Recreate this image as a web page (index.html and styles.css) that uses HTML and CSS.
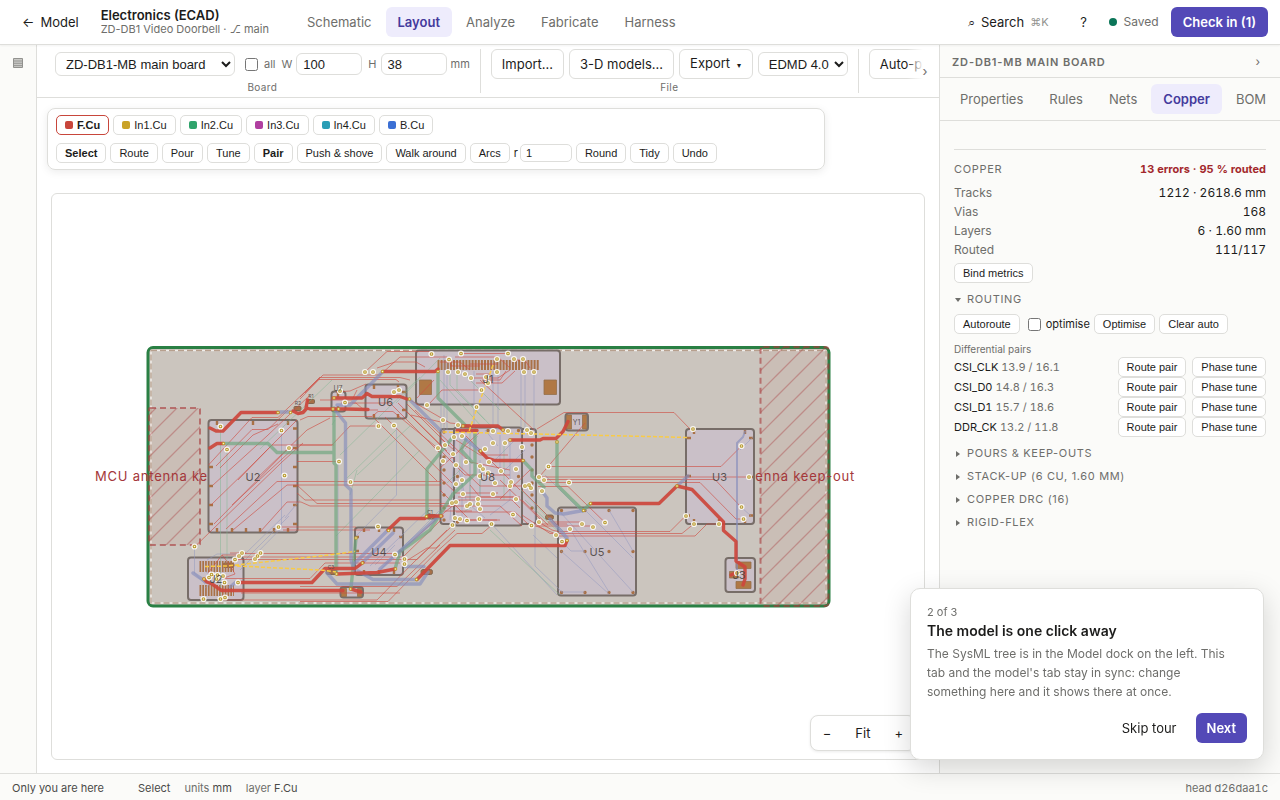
FILE: index.html
```html
<!DOCTYPE html>
<html lang="en">
<head>
<meta charset="utf-8">
<title>Electronics (ECAD)</title>
<link rel="stylesheet" href="styles.css">
</head>
<body>
<header class="topbar">
  <button class="ghost back"><span>←</span> Model</button>
  <div class="brand">
    <h1>Electronics (ECAD)</h1>
    <p>ZD-DB1 Video Doorbell · ⎇ main</p>
  </div>
  <nav class="tabs">
    <button>Schematic</button><button class="active">Layout</button><button>Analyze</button><button>Fabricate</button><button>Harness</button>
  </nav>
  <div class="top-actions">
    <button class="ghost search"><span class="glass">⌕</span> Search <kbd>⌘K</kbd></button>
    <button class="ghost help">?</button>
    <span class="saved"><i></i>Saved</span>
    <button class="primary">Check in (1)</button>
  </div>
</header>

<div class="workspace">
  <aside class="rail">
    <button class="rail-button" aria-label="Model dock">
      <svg width="12" height="12" viewBox="0 0 12 12"><path d="M1.5 1.5h9v9h-9z" fill="#c9c9c6" stroke="#92928f"/><path d="M1 4h10M1 6.3h10M1 8.6h10" stroke="#92928f" stroke-width=".9"/></svg>
    </button>
  </aside>

  <main class="center">
    <div class="ribbon">
      <section class="group board-group">
        <div class="group-row">
          <select class="board-select" aria-label="Board"><option>ZD-DB1-MB main board</option></select>
          <label class="all"><input type="checkbox"> all</label>
          <label class="dim">W <input type="text" value="100"></label>
          <label class="dim height">H <input type="text" value="38"> mm</label>
        </div>
        <span class="group-name">Board</span>
      </section>
      <section class="group file-group">
        <div class="group-row">
          <button class="tool">Import…</button><button class="tool">3-D models…</button><button class="tool">Export <small>▾</small></button>
          <select class="format" aria-label="Format"><option>EDMD 4.0</option></select>
        </div>
        <span class="group-name">File</span>
      </section>
      <section class="group place-group">
        <div class="group-row"><button class="tool">Auto-place</button></div>
      </section>
      <button class="more" aria-label="More tools">›</button>
    </div>

    <div class="palette">
      <div class="palette-row">
        <button class="mini layer on"><i class="c-f"></i>F.Cu</button>
        <button class="mini layer"><i class="c-1"></i>In1.Cu</button>
        <button class="mini layer"><i class="c-2"></i>In2.Cu</button>
        <button class="mini layer"><i class="c-3"></i>In3.Cu</button>
        <button class="mini layer"><i class="c-4"></i>In4.Cu</button>
        <button class="mini layer"><i class="c-b"></i>B.Cu</button>
      </div>
      <div class="palette-row">
        <button class="mini strong">Select</button>
        <button class="mini">Route</button>
        <button class="mini">Pour</button>
        <button class="mini">Tune</button>
        <button class="mini strong">Pair</button>
        <button class="mini">Push &amp; shove</button>
        <button class="mini">Walk around</button>
        <button class="mini">Arcs</button>
        <label class="radius">r <input type="text" value="1"></label>
        <button class="mini">Round</button>
        <button class="mini">Tidy</button>
        <button class="mini">Undo</button>
      </div>
    </div>

    <div class="canvas">
      <svg class="board" viewBox="52 194 872 565" role="img" aria-label="Board layout">
        <defs>
          <pattern id="hatch" width="21" height="21" patternUnits="userSpaceOnUse">
            <path d="M-1 19L19-1M16 23L23 16" stroke="#a8383a" stroke-opacity=".36" stroke-width="1.3"/>
          </pattern>
          <path id="vias" d="M220.500 426.500h0M281.500 430.500h0M227 449.500h0M289 448h0M284.500 475.500h0M278.500 527h0M194.500 546.500h0M365 372h0M373 372h0M431.500 354h0M461 353.500h0M508 353.500h0M449 359.500h0M497 359h0M514 359h0M523 359h0M448 372h0M458 372h0M465 374h0M471 378h0M497 372h0M524 372h0M534 372h0M486 377h0M488 383h0M481.500 390h0M476.500 407h0M427 405h0M443 420h0M458 425h0M345 402.500h0M378.500 426h0M394 425.500h0M394 392h0M399 390h0M340 391h0M339 461.500h0M350.500 482h0M378 526.500h0M395 554.500h0M404.500 559h0M404.500 564h0M462 436h0M454 437h0M493 431h0M508 431h0M527 430h0M531 433h0M505 443h0M493 443h0M522 447h0M485 449h0M445 445h0M438 448h0M453 454h0M443 461h0M466 462h0M489 462h0M456 465h0M480 466h0M483 469h0M516 469h0M501 471h0M480 476h0M488 473h0M548.500 466.500h0M539 477h0M544 480h0M569 482.500h0M542 491h0M605 522.500h0M593 527h0M582 524h0M570 529h0M562 541.500h0M556 535h0M531.500 525.500h0M539 522h0M491.500 524h0M452.500 525h0M455 518h0M460 519h0M467 520.500h0M479.500 519h0M513 514.500h0M480 509h0M478 499h0M478 504h0M467 506h0M470 504h0M456 502h0M452 503h0M463 494h0M493 494h0M516 499h0M456 484h0M462 480h0M495 483h0M511 482h0M510 486h0M525 486h0M529 485h0M531 488h0M693 429h0M741.500 446h0M749 477h0M741.500 507h0M743.500 519h0M686 516h0M694 524h0M719 524h0M242 553h0M239 556h0M235 559.500h0M260.500 553h0M257.500 556h0M255 559h0M211.500 574.500h0M217.500 575h0M223 576h0M209 577.500h0M216.500 579h0M224.500 582.500h0M238 582.500h0M203.500 599h0M220.500 599h0M225 597.500h0M737 573h0"/>
          <path id="spots" d="M278 412.500h0M290.500 412.500h0M223.500 443.500h0M382.500 371.500h0M438 371.500h0M334 398h0M333 409h0M338.500 409h0M409.500 399h0M388.500 530.500h0M362.500 563h0M336.500 574h0M395.500 569h0M350.500 589h0M356 538h0M426.500 516.500h0M441 516h0M463 426h0M503 430h0M510 440h0M480.500 451h0M523 460.500h0M557 442h0M583.500 510.500h0M590.500 503.500h0M567 540.500h0M416.500 579.500h0M677 486h0M204 579h0"/>
        </defs>
        <rect class="outline" x="148" y="347.500" width="681" height="258.500" rx="5"/>
        <rect class="edge-white" x="151" y="350.500" width="675" height="252.500"/>
        <rect class="edge-dash" x="151" y="350.500" width="675" height="252.500"/>
        <g class="keepout">
          <rect x="149" y="408" width="51" height="137" rx="1"/>
          <rect x="149" y="408" width="51" height="137"/>
          <rect x="760.500" y="347" width="68" height="259" rx="3"/>
          <rect x="760.500" y="347" width="68" height="259"/>
        </g>
        <g class="keepout-name">
          <text x="174.500" y="481">MCU antenna keep-out</text>
          <text x="794.500" y="481">antenna keep-out</text>
        </g>
        <g class="part">
          <rect x="208.500" y="420" width="89" height="112.500" rx="3"/>
          <rect x="365.500" y="384.500" width="41" height="34" rx="3"/>
          <rect x="331.500" y="391.500" width="14" height="20" rx="3"/>
          <rect x="416" y="350.500" width="144" height="54" rx="3"/>
          <rect x="440.500" y="429" width="95.500" height="95" rx="3"/>
          <rect x="454" y="427.500" width="68" height="98" rx="3"/>
          <rect x="355" y="527.500" width="48" height="47.500" rx="3"/>
          <rect x="558" y="507.500" width="78" height="88" rx="3"/>
          <rect x="686" y="429" width="68" height="95" rx="3"/>
          <rect x="725.500" y="558" width="29.500" height="34" rx="3"/>
          <rect x="188" y="557.500" width="55.500" height="42.500" rx="3"/>
          <rect x="565.500" y="413.500" width="22.500" height="17" rx="3"/>
          <rect x="340.500" y="587" width="22.500" height="10.500" rx="3"/>
        </g>
        <g class="small-part">
          <rect x="326" y="570" width="11" height="4.500" rx="2"/><rect x="421" y="569.500" width="11.500" height="5" rx="2"/>
          <rect x="426" y="514.500" width="11" height="4.500" rx="2"/><rect x="294" y="406.500" width="7" height="4" rx="1"/>
          <rect x="307.500" y="399.500" width="7" height="4" rx="1"/><rect x="545.500" y="515" width="8" height="4.500" rx="2"/>
          <rect x="223" y="563" width="11" height="4.500" rx="2"/>
        </g>
        <g class="pad">
          <path d="M419.500 380h12v14.500h-12zM544 380h12.500v14.500H544zM736 562h15v6.500h-15zM729.500 571.500h9v6.500h-9zM736 581.500h15v7h-15zM566.500 415h5v14h-5zM582.500 415h4v14h-4zM341.500 588.500h5v8h-5zM357.500 588.500h4v8h-4z"/>
          <path class="fingers" d="M437.500 365H539"/>
          <path class="fingers small" d="M199.500 566.500H234M199.500 590.500H234"/>
          <path class="pins" d="M217 421v4M253 421v4M288 421v4M293 428.500h4M293 448h4M293 467h4M293 486h4M293 505h4M293 524h4M209 467h4M209 486h4M209 505h4M209 524h4M217 528v4M232 528v4M246 528v4M260 528v4M274 528v4M288 528v4M374 385v4M398 385v4M374 414v4M398 414v4M402 392h4M402 410h4M338 392v5M338 406v5M364 528v4M379 528v4M394 528v4M356 551h3M399 537h3M356 537h3M399 551h3M364 570v4M379 570v4M394 570v4M694 430v4M745 430v4M687 438h4M749 438h4M687 476h4M749 477h4M686 515.500h4M749 515.500h4M694 519v4M719 519v4M745 519v4"/>
          <path class="balls" d="M561.500 510.500h0M585 510.500h0M609 510.500h0M633 510.500h0M561.500 551.500h0M585 551.500h0M609 551.500h0M633 551.500h0M561.500 592.500h0M585 592.500h0M609 592.500h0M633 592.500h0M444 432h0M444 445h0M444 457h0M444 470h0M444 483h0M444 495h0M444 508h0M444 520h0M532 432h0M532 445h0M532 457h0M532 470h0M532 483h0M532 495h0M532 508h0M457.500 476.500h0M518.500 430.500h0M518.500 476.500h0M457.500 522h0M488 430.500h0"/>
        </g>

        <g class="thin violet">
          <path d="M281.500 430.500V528L240 570M396.500 426V495L356 536M441 405V430M444 355V430M447 360V430M474 371V440M493 371V425M521 371V440M525 371V432M534 371V430M498 371V430M194.500 547V573L205 584M207 560L217 554H245L285 515M245 560L289 516M300 500L285 518M488 520L557 595M535 490V566L562 592M545 475L583 513M533 535L557 558M567 524L609 592M585 551H571L561 541M609 510L633 551M585 510L633 558M561 551L609 594M561 592H585M560 512L633 592M462 440V520M470 445V505L485 518M500 435V470M510 438V500L490 515M480 460V508M459 470L466 500M740 450L753 437M741 507L751 516M515 440L490 465M525 450L500 475M455 440L450 520M498 446L485 430M338 461V571M380 570L440 510M370 566L430 508M375 565L395 545M205 571L215 580 205 588"/>
        </g>
        <g class="thin green">
          <path d="M220.500 427V600M227 449V562M260 449L332 380M347 478L396 430M396 403L440 358M357 475L410 426M450 371V385L485 420M457 371V390L490 425M466 371V376L500 410M336 536L420 450M521 490L560 530M490 530L560 595M470 430V500M480 465V500L464 512M460 437V470L447 483M504 440V500M525 500L567 540M530 498L565 533M340 455L420 377M465 449L478 436M440 380L480 425M335 420L332 425M350 495L357 470"/>
        </g>
        <g class="thin red">
          <path d="M208.500 465L252 417.500H278L320 377.500H400L410 380M216 466L252 429.500H268L288 410M220 468L253 435 278 424M300 397L320 377M305 393L323 375H380L400 357H447L452 366M365 372L387 351.500H430M377 368L395 362H416L425 367M300 399L319 379.500H396L399 382M298 414L308 408M213 485L267 436 310 395M300 420L308 416.500H372L378 411.500H393L440 450M300 445H332L350 426H378M297 461.500H337M238 480L272 445H334M232 505L294 448M255 480L307 430 330 418M211 505L250 467 297 420M195 546.500L282 462 303 443M226 529L277 481.500H441M233 530L287 485H441M214 524L287 450M260 532L287 502H301L310 506H450M297 485L317 503.500H452M278 527H356M283 530H357L370 530M297 493L305 500H440M243 553.500H398L440 516 460 500M243 557H403L441 520M237 559.500H417L453 525M223 578.500H310L325 563H400M220 600H377L413 563 447 530M300 601.500H388L437 551.500 457 533.500H482L492 525M300 586.500H397L440 545M241 593H400M403 563L427 548H436L455 530M320 400H352L357 390M352 403H390L440 453M375 419L437 481M385 417L452 483M398 403L447 451M407 404L449 446M406 411L455 460M410 400L450 423 480 426M430 403L442 390H482M417 398L434 380M480 380L534 430M411 415L445 423M415 410L470 462 510 470M537 429L564 412.500H674L690 429M540 476L585 423M548 466.500H721L741 446.500M535 477H749M538 479.500H715L741 507M538 482.500H700L736 519H743M538 486.500H568L605 522.500M560 531.500H670L685 516.500M560 533.500H682L693 524.500M558 536H695L707 524H719M537 521L552 530 560 532M522 515L550 533.500H563M536 526L556 534M534 526H593M548 522H582M537 524H567M522 500L548 525M522 490L557 525M500 480L540 519M440 438L454 450M440 450L465 475H510M440 478L456 493H498M440 490L470 520H497M441 506H500L522 526M441 511H472M454 500H512L520 508M456 512H515L528 524M458 497H514M456 520H500M470 485L480 497H520M456 463L480 486H530M456 440L480 455H508M466 436L520 490M440 468L480 432M530 470L500 499M455 357H498L510 368M440 362H460L470 370M461 353.500H510M450 366H480M470 364H498M515 360H525L530 368M470 378H498L510 370M476 383H502L515 371M482 380H500L506 371M476 374H490M208 573L222 555H239M222 555L230 565 235 574 224 578M230 553L246 553M336 392L350 391 366 384M341 403H356L364 410H378"/>
        </g>
        <g class="wide green">
          <path d="M223 443.500H268L277 452.500H334M334 408V463L336 465V573M438 371.500V398L467 427M453 437L427 469V516M557 441.500V485L583 510.500 590 504M475 430V474L453 494 430 530 400 551.500 395 569M356 538L351 588M523 460.500L532 470V476L544 487M466 440L461 450 472 462"/>
        </g>
        <g class="wide violet">
          <path d="M278 412H290M383 371.500L350 405H337M335 410L345.500 423V485L351 490V560L354 570M409 399L440 430 M463 437L480 451M388 530L353 565M393 533L362 563M327 573L337 584H372L384 584M358 571L373 579.500H417M371 584H420L428 572M405 566.500H424M380 569L440 515M542 491L547 498V506L555 513 564 514 583 510.500M550 519L567 538M193 573L206 582M236 582L230 587M688 476L677 486"/>
          <path class="mid" d="M745 431.500L743 437 737 443V573"/>
        </g>
        <g class="wide red">
          <path d="M210 428L216 431H223L241 412.500H278M293 411L298 413.500 303 412.500 307 408 310 409H346L368 409.500M306 408L307.500 400M333 398H362L367 393.500 372 396.500H400L407 399M210 448L217 443.500H223M383 371.500H435L438 369M463 426H498L503 430M457 430.500H477M510 440H540L543 438.500H556L563 431.500 568 421.500M480 451L487 458 495 460.500H523M590.500 503.500H659L677 486 692 489.500 723.500 522V530.500L736 541.500V561L745 567V579L743 585M417 579.500L450 545.500H565L567 540.500M388 530L400 518.500H425L428 516H442M237.500 582.500H312L325 568.500H355L363 562.500M337 574L377 572.500 395 569M204 579L207 582 212 584 221.500 590.500H343M351 589L361 592M731 575L738 572"/>
        </g>
        <g class="air">
          <path d="M205 566.500L227 566 320 556 355 551.500M237 566L320 570 336 572M443 432L650 436.500 687 437.500M493 365L484 390 477 408 469 431.500"/>
        </g>
        <g class="dots">
          <use href="#vias" class="via-halo"/>
          <use href="#vias" class="via-ring"/>
          <use href="#vias" class="via-hole"/>
          <use href="#spots" class="spot"/>
          <use href="#spots" class="spot-core"/>
        </g>
        <g class="designator">
          <text x="253" y="480.500">U2</text><text x="385.500" y="406">U6</text><text x="488" y="382.500">J1</text>
          <text x="487.500" y="480.500">U8</text><text x="379" y="555.500">U4</text><text x="597" y="555.500">U5</text>
          <text x="719.500" y="480.500">U3</text><text x="739" y="579">J3</text><text x="216" y="583">J2</text>
          <text class="s" x="338" y="390.500">U7</text><text class="s" x="576.500" y="425">Y1</text>
          <text class="xs" x="298" y="405">R2</text><text class="xs" x="311" y="398">R1</text><text class="xs" x="430" y="514">C1</text><text class="xs" x="331" y="569">C3</text>
        </g>
      </svg>
      <div class="zoom"><button>−</button><button>Fit</button><button>+</button></div>
    </div>
  </main>

  <aside class="inspector">
    <div class="inspector-head"><h2>ZD-DB1-MB main board</h2><button aria-label="Collapse panel">›</button></div>
    <nav class="tabs inspector-tabs">
      <button>Properties</button><button>Rules</button><button>Nets</button><button class="active">Copper</button><button>BOM</button>
    </nav>
    <div class="inspector-body">
      <section class="copper">
        <div class="copper-head"><h3>Copper</h3><strong>13 errors · 95 % routed</strong></div>
        <dl class="stats">
          <div><dt>Tracks</dt><dd>1212 · 2618.6 mm</dd></div>
          <div><dt>Vias</dt><dd>168</dd></div>
          <div><dt>Layers</dt><dd>6 · 1.60 mm</dd></div>
          <div><dt>Routed</dt><dd>111/117</dd></div>
        </dl>
        <button class="mini">Bind metrics</button>
      </section>
      <details open>
        <summary>Routing</summary>
        <div class="route-tools">
          <button class="mini">Autoroute</button>
          <label class="opt"><input type="checkbox"> optimise</label>
          <button class="mini">Optimise</button>
          <button class="mini">Clear auto</button>
        </div>
        <p class="sub">Differential pairs</p>
        <ul class="pairs">
          <li><span>CSI_CLK <em>13.9 / 16.1</em></span><button class="mini">Route pair</button><button class="mini">Phase tune</button></li>
          <li><span>CSI_D0 <em>14.8 / 16.3</em></span><button class="mini">Route pair</button><button class="mini">Phase tune</button></li>
          <li><span>CSI_D1 <em>15.7 / 18.6</em></span><button class="mini">Route pair</button><button class="mini">Phase tune</button></li>
          <li><span>DDR_CK <em>13.2 / 11.8</em></span><button class="mini">Route pair</button><button class="mini">Phase tune</button></li>
        </ul>
      </details>
      <details><summary>Pours &amp; keep-outs</summary></details>
      <details><summary>Stack-up (6 Cu, 1.60 mm)</summary></details>
      <details><summary>Copper DRC (16)</summary></details>
      <details><summary>Rigid-flex</summary></details>
    </div>
  </aside>
</div>

<footer class="status">
  <span class="who">Only you are here</span>
  <span>Select</span>
  <span><em>units</em> mm</span>
  <span><em>layer</em> F.Cu</span>
  <span class="head">head d26daa1c</span>
</footer>

<div class="tour" role="dialog" aria-labelledby="tour-title">
  <p class="step">2 of 3</p>
  <h2 id="tour-title">The model is one click away</h2>
  <p class="copy">The SysML tree is in the Model dock on the left. This tab and the model's tab stay in sync: change something here and it shows there at once.</p>
  <div class="tour-actions"><button class="ghost">Skip tour</button><button class="primary">Next</button></div>
</div>
</body>
</html>
```
FILE: styles.css
```css
* { box-sizing: border-box; }
body {
  margin: 0;
  height: 100vh;
  display: grid;
  grid-template-rows: auto 1fr auto;
  overflow: hidden;
  background: #fff;
  color: #1c1c1b;
  font: 13px/20px Inter, "Liberation Sans", sans-serif;
}
h1, h2, h3, p, dl, dd, ul { margin: 0; padding: 0; }
button, input, select { font-family: "Liberation Sans", sans-serif; color: #1c1c1b; margin: 0; }
input[type="checkbox"] { width: 13px; height: 13px; }
em { font-style: normal; color: #6e6e6b; }

/* Top bar */
.topbar {
  position: relative;
  z-index: 1;
  display: flex;
  align-items: center;
  height: 45px;
  padding: 0 12px 1px;
  border-bottom: 1px solid #dededb;
  box-shadow: 0 1px 2px rgba(0, 0, 0, .05);
}
.ghost, .primary, .tabs button {
  height: 30px;
  padding: 0 11px;
  border: 0;
  border-radius: 6px;
  background: none;
  font: 13px/20px Inter, "Liberation Sans", sans-serif;
  white-space: nowrap;
}
.back { display: flex; align-items: center; gap: 6px; padding: 0 10px; }
.topbar .primary, .tour .primary, .tabs .active { font-weight: 600; }
.primary { background: #5349b7; color: #fff; }
.topbar .primary { padding: 0 12px; }
.brand { margin-left: 12px; }
.brand h1 { font-size: 13px; line-height: 15px; font-weight: 600; }
.brand p { font-size: 11px; line-height: 13px; color: #6e6e6b; }
.tabs { display: flex; gap: 2px; }
.tabs button { padding: 0 12px; color: #6e6e6b; }
.tabs .active { background: #eeecfc; color: #443a9c; }
.topbar .tabs { margin-left: 26px; }
.top-actions { margin-left: auto; display: flex; align-items: center; }
.search { display: flex; align-items: center; gap: 6px; }
.search .glass { width: 8px; }
.search kbd { font: 11px/20px Inter, sans-serif; color: #92928f; }
.help { margin: 0 10px 0 9px; width: 30px; }
.saved { display: flex; align-items: center; gap: 7px; margin-right: 12px; font-size: 12px; color: #6e6e6b; }
.saved i { width: 8px; height: 8px; border-radius: 50%; background: #0b7558; }

/* Work area */
.workspace { display: grid; grid-template-columns: 37px minmax(0, 1fr) 341px; min-height: 0; }
.rail { padding-top: 12px; text-align: center; background: #fbfbf9; border-right: 1px solid #dededb; }
.rail-button { display: block; margin: 0 auto; padding: 0; border: 0; background: none; line-height: 0; }
.center { display: flex; flex-direction: column; min-width: 0; min-height: 0; }

.ribbon { position: relative; display: flex; height: 53px; padding: 4px 0 4px 8px; border-bottom: 1px solid #dededb; overflow: hidden; }
.group { display: flex; flex-direction: column; align-items: center; flex: none; padding: 0 10px; border-right: 1px solid #dededb; }
.group-row { display: flex; flex: none; align-items: center; height: 30px; gap: 6px; }
.file-group .group-row { gap: 5px; }
.place-group { border: 0; }
.group-name { font-size: 10px; line-height: 16px; color: #6e6e6b; letter-spacing: .04em; }
.ribbon select { height: 24px; border: 1px solid #dededb; border-radius: 6px; background: #fff; font-size: 13px; }
.board-select { width: 180px; padding: 0 6px; }
.format { width: 90px; padding: 0 2px 0 6px; }
.all { display: flex; align-items: center; gap: 6px; margin-left: 4px; font-size: 11px; color: #6e6e6b; }
.dim { display: flex; align-items: center; gap: 4px; font-size: 11px; color: #6e6e6b; }
.dim input { width: 66px; height: 22px; padding: 0 6px; border: 1px solid #dededb; border-radius: 6px; font-size: 13px; }
.tool { height: 30px; padding: 0 10px; border: 1px solid #dededb; border-radius: 6px; background: #fff; font: 13px/20px Inter, sans-serif; white-space: nowrap; }
.tool small { font-size: 8px; margin: 0 1px 0 3px; }
.more {
  position: absolute; right: 0; top: 0; bottom: 0; width: 32px;
  padding: 0 0 0 4px; border: 0; color: #6e6e6b; font: 13px/20px Inter, sans-serif;
  background: linear-gradient(90deg, rgba(255, 255, 255, 0), #fff 50%);
}

.mini {
  height: 20px; padding: 0 8px; border: 1px solid #dededb; border-radius: 5px;
  background: #fff; font: 11px/16px "Liberation Sans", sans-serif; white-space: nowrap;
}
.strong, .on { font-weight: 700; }
.palette {
  display: grid; gap: 8px; width: 778px; max-width: calc(100% - 20px);
  margin: 10px 10px 0; padding: 6px 8px; border: 1px solid #dededb; border-radius: 8px;
  box-shadow: 0 2px 8px rgba(0, 0, 0, .08);
}
.palette-row { display: flex; align-items: center; gap: 4px; }
.layer { display: inline-flex; align-items: center; gap: 4px; }
.layer i { width: 8px; height: 8px; border-radius: 2px; }
.on { border-color: #c8463b; }
.c-f { background: #c8463b; } .c-1 { background: #c9a227; } .c-2 { background: #2fa36b; }
.c-3 { background: #b03fa0; } .c-4 { background: #2a9db5; } .c-b { background: #3b6fd4; }
.radius { display: flex; align-items: center; gap: 2px; font: 11px/16px Inter, sans-serif; }
.radius input { width: 52px; height: 18px; padding: 0 5px; border: 1px solid #dededb; border-radius: 5px; font-size: 11px; }

.canvas { position: relative; flex: 1; min-height: 0; margin: 23px 14px 13px; border: 1px solid #dededb; border-radius: 6px; }
.board { display: block; width: 100%; height: 100%; }
.zoom {
  position: absolute; right: 8px; bottom: 8px; display: flex; align-items: center; height: 36px; padding: 0 2px;
  border: 1px solid #dededb; border-radius: 8px; background: #fff; box-shadow: 0 1px 3px rgba(0, 0, 0, .08);
}
.zoom button { height: 30px; padding: 0 10px; border: 0; background: none; font: 13px/20px Inter, sans-serif; }
.zoom button:nth-child(2) { padding: 0 14px; }

/* Board drawing */
.board path, .board rect { fill: none; }
.board .outline { fill: #cbc5be; stroke: #2a8044; stroke-width: 3; }
.board .edge-white { stroke: #f1eeea; stroke-width: 1.4; }
.board .edge-dash { stroke: #b7a08e; stroke-width: 1.3; stroke-dasharray: 6 3; }
.board .keepout rect:nth-child(odd) { fill: #b4504a; fill-opacity: .06; stroke: #a8383a; stroke-opacity: .6; stroke-width: 2; stroke-dasharray: 6 4; }
.board .keepout rect:nth-child(even) { fill: url(#hatch); }
.keepout-name { font: 13px Inter, sans-serif; fill: #a4373a; text-anchor: middle; letter-spacing: .06em; }
.board .part rect { fill: #cac0c8; stroke: #776d68; stroke-width: 2; }
.board .small-part rect { fill: #a66f47; stroke: #81664f; stroke-width: 1; }
.board .pad path { stroke: #a97146; stroke-width: 2.4; }
.board .pad path:first-child { fill: #b07845; stroke: #94704b; stroke-width: .8; }
.board .pad .fingers { stroke-width: 10; stroke-dasharray: 2 1.1; }
.board .pad .small { stroke-width: 11; stroke-dasharray: 1.7 1.1; }
.board .pad .balls { stroke-width: 3.4; stroke-linecap: round; }
.thin path { stroke-width: .8; }
.thin.red path { stroke: #cf4b40; stroke-opacity: .78; }
.thin.green path { stroke: #7fb592; stroke-opacity: .6; }
.thin.violet path { stroke: #9298c0; stroke-opacity: .65; }
.wide path { stroke-width: 3.4; stroke-linecap: round; stroke-linejoin: round; }
.wide.red path { stroke: #cc473c; stroke-opacity: .93; }
.wide.green path { stroke: #6fa67f; stroke-opacity: .68; }
.wide.violet path { stroke: #858dbb; stroke-opacity: .65; }
.wide .mid { stroke-width: 2; }
.air path { stroke: #f9cb46; stroke-width: 1.5; stroke-dasharray: 4 2; }
.dots { stroke-linecap: round; }
.via-halo { stroke: #fbf8f4; stroke-opacity: .92; stroke-width: 6.2; }
.via-ring { stroke: #b79a30; stroke-width: 3.7; }
.via-hole { stroke: #fdf6d8; stroke-width: 1.5; }
.spot { stroke: #c09a2c; stroke-width: 3.6; }
.spot-core { stroke: #fdf0c0; stroke-width: 1.6; }
.designator { font: 11px Inter, sans-serif; fill: #49423e; fill-opacity: .88; text-anchor: middle; }
.designator .s { font-size: 7px; }
.designator .xs { font-size: 5px; }

/* Inspector */
.inspector { background: #fbfbf9; border-left: 1px solid #dededb; min-width: 0; overflow: hidden; }
.inspector-head { display: flex; align-items: center; justify-content: space-between; height: 33px; padding: 1px 14px 0 12px; border-bottom: 1px solid #dededb; }
.inspector-head h2 { font-size: 11px; line-height: 16px; font-weight: 600; letter-spacing: .08em; text-transform: uppercase; color: #6e6e6b; }
.inspector-head button { border: 0; padding: 0 6px; background: none; color: #6e6e6b; font: 12px/20px Inter, sans-serif; }
.inspector-tabs { height: 43px; padding: 6px 8px; border-bottom: 1px solid #dededb; }
.inspector-body { padding: 28px 14px; }
.copper { border-top: 1px solid #dededb; padding-top: 9px; }
.copper-head { display: flex; justify-content: space-between; margin-bottom: 4px; font-size: 11px; line-height: 20px; }
.copper-head h3, summary { font: 11px/20px Inter, sans-serif; letter-spacing: .06em; text-transform: uppercase; color: #6e6e6b; }
.copper-head strong { color: #a3282c; font-weight: 700; }
.copper-head strong, .stats, .pairs, .head { font-variant-numeric: tabular-nums; }
.stats { font-size: 12px; line-height: 19px; }
.stats div { display: flex; justify-content: space-between; }
.stats dt { color: #6e6e6b; }
.copper .mini { display: block; margin-top: 4px; }
summary { display: flex; align-items: center; gap: 6px; }
summary::before {
  content: ""; width: 0; height: 0; margin: 2px 1px 0 2px;
  border-left: 4px solid #6e6e6b; border-top: 3px solid transparent; border-bottom: 3px solid transparent;
}
details[open] > summary::before { margin: 2px 0 0 1px; border: 3px solid transparent; border-top: 4px solid #6e6e6b; border-bottom: 0; }
details { margin-top: 3px; }
.copper + details { margin-top: 6px; }
.route-tools { display: flex; align-items: center; gap: 4px; margin-top: 5px; }
.opt { display: flex; align-items: center; gap: 5px; margin-left: 4px; font-size: 11px; }
.sub { margin-top: 7px; font-size: 10px; line-height: 16px; color: #6e6e6b; }
.pairs { margin-bottom: 6px; list-style: none; font-size: 11px; line-height: 20px; }
.pairs li { display: flex; gap: 6px; }
.pairs span { flex: 1; }

/* Status bar */
.status { display: flex; align-items: center; gap: 14px; height: 27px; padding: 2px 12px 0; border-top: 1px solid #dededb; background: #fbfbf9; font-size: 11px; line-height: 16px; color: #4a4a48; }
.who { margin-right: 20px; }
.head { margin-left: auto; color: #6e6e6b; }

/* Guided tour card */
.tour {
  position: fixed; z-index: 2; right: 16px; bottom: 40px; width: 354px; padding: 15px 16px 16px;
  border: 1px solid #dededb; border-radius: 10px; background: #fff; box-shadow: 0 8px 28px rgba(0, 0, 0, .16);
}
.step { font-size: 11px; line-height: 16px; color: #6e6e6b; }
.tour h2 { margin-top: 1px; font-size: 14px; line-height: 20px; font-weight: 600; }
.copy { margin-top: 3px; padding-right: 12px; font-size: 12px; line-height: 19px; color: #6e6e6b; }
.tour-actions { display: flex; justify-content: flex-end; gap: 8px; margin-top: 12px; }
```
